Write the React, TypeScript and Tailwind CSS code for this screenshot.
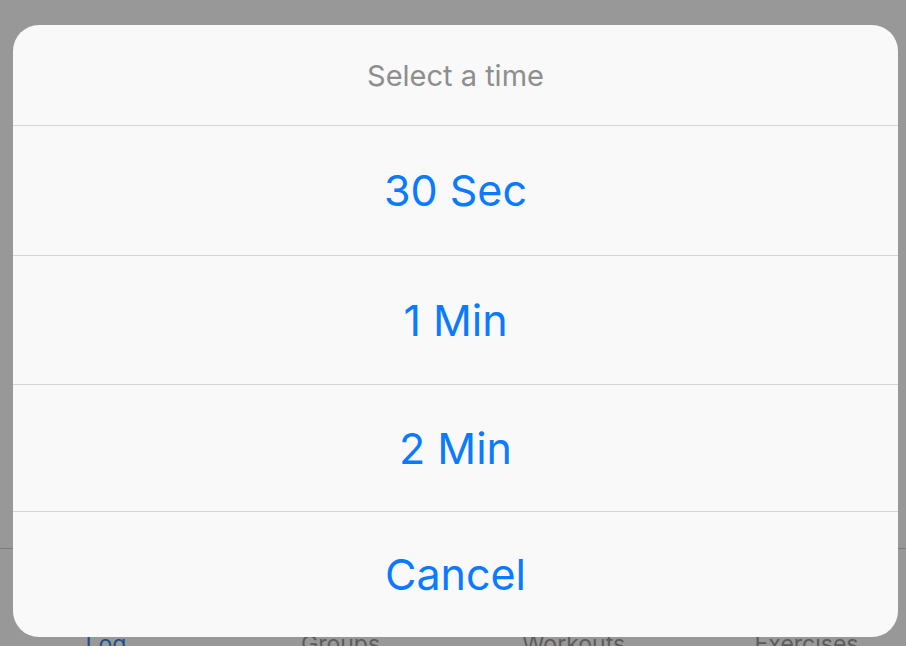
import React from "react";

export default function App() {
  const rows = [
    { label: "30 Sec", h: "h-[130px]" },
    { label: "1 Min", h: "h-[129px]" },
    { label: "2 Min", h: "h-[127px]" },
    { label: "Cancel", h: "h-[126px]" },
  ];
  return (
    <div
      className="relative h-[646px] w-[906px] overflow-hidden bg-[#989898]"
      style={{ fontFamily: "Inter, 'Noto Sans', sans-serif" }}
    >
      {/* background tab bar */}
      <div className="h-[548px]" />
      <div className="h-[98px] border-t border-[#7c7c7c]">
        <div className="ml-[-12px] mt-[84px] flex text-[23px] leading-[22px] text-[#5c5c5c]">
          <div className="w-[236px] shrink-0 text-center text-[#1c4f8a]">Log</div>
          <div className="w-[233px] shrink-0 text-center">Groups</div>
          <div className="w-[233px] shrink-0 text-center">Workouts</div>
          <div className="w-[233px] shrink-0 text-center">Exercises</div>
        </div>
      </div>

      {/* action sheet */}
      <div className="absolute left-[13px] top-[25px] flex h-[612px] w-[885px] flex-col overflow-hidden rounded-[26px] bg-[#f9f9f9]">
        <div className="flex h-[100px] items-center justify-center pt-[2px] text-[29px] text-[#8e8e8e]">
          Select a time
        </div>
        {rows.map((r) => (
          <div
            key={r.label}
            className={`flex ${r.h} items-center justify-center border-t border-[#d6d6d6] text-[43px] text-[#0a7aff]`}
          >
            {r.label}
          </div>
        ))}
      </div>
    </div>
  );
}
